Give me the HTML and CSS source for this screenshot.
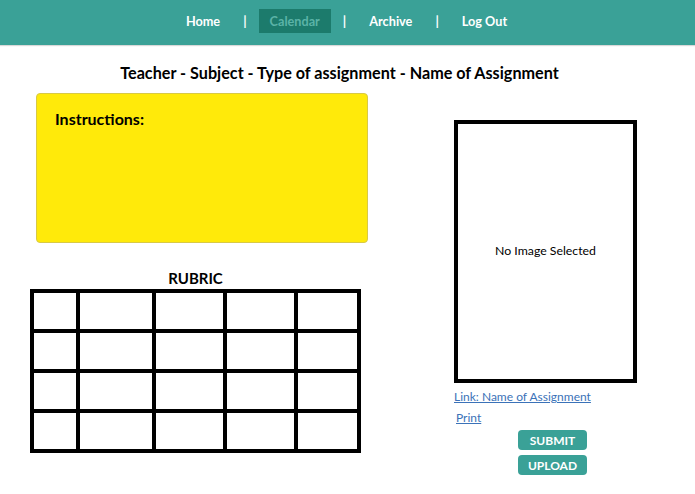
FILE: index.html
```html
<!DOCTYPE html>
<html>
<head>
<meta charset="utf-8">
<link rel="stylesheet" href="styles.css">
</head>
<body>
<nav class="nav">
  <a class="nav-item">Home</a>
  <span class="sep">|</span>
  <a class="nav-item active">Calendar</a>
  <span class="sep">|</span>
  <a class="nav-item">Archive</a>
  <span class="sep">|</span>
  <a class="nav-item">Log Out</a>
</nav>
<h1 class="title">Teacher - Subject - Type of assignment - Name of Assignment</h1>
<main class="main">
  <section class="left">
    <div class="instructions">Instructions:</div>
    <h2 class="rubric-title">RUBRIC</h2>
    <table class="rubric">
      <tr><td class="c1"></td><td class="c2"></td><td class="c3"></td><td class="c4"></td><td class="c5"></td></tr>
      <tr><td></td><td></td><td></td><td></td><td></td></tr>
      <tr><td></td><td></td><td></td><td></td><td></td></tr>
      <tr><td></td><td></td><td></td><td></td><td></td></tr>
    </table>
  </section>
  <section class="right">
    <div class="image-box">No Image Selected</div>
    <a class="link link-name" href="#">Link: Name of Assignment</a>
    <a class="link link-print" href="#">Print</a>
    <div class="buttons">
      <button class="btn">SUBMIT</button>
      <button class="btn">UPLOAD</button>
    </div>
  </section>
</main>
</body>
</html>
```
FILE: styles.css
```css
* { box-sizing: border-box; }
body {
  margin: 0;
  font-family: Lato, "Open Sans", sans-serif;
  color: #000;
  background: #fff;
}
.nav {
  height: 45px;
  background: #3aa197;
  display: flex;
  align-items: center;
  justify-content: center;
  padding-bottom: 4px;
  padding-right: 2px;
  box-shadow: 0 1px 1px rgba(0,0,0,0.15);
}
.nav-item {
  color: #fff;
  font-weight: 700;
  font-size: 12.7px;
  padding: 0 11px;
  height: 24px;
  line-height: 24px;
  display: inline-block;
}
.nav-item.active {
  background: #1c7b6c;
  color: #5bb3a7;
}
.sep {
  color: #fff;
  font-weight: 700;
  font-size: 13px;
  padding: 0 12px;
}
.title {
  margin: 17px 0 0;
  font-size: 16.2px;
  line-height: 22px;
  font-weight: 700;
  text-align: center;
  padding-right: 16px;
}
.main {
  display: flex;
  padding-left: 30px;
  margin-top: 9px;
}
.left {
  width: 338px;
}
.instructions {
  margin-left: 6px;
  width: 332px;
  height: 150px;
  background: #ffea0a;
  border: 1px solid #d8c946;
  border-radius: 4px;
  padding: 14px 18px;
  font-weight: 700;
  font-size: 16px;
  line-height: 22px;
}
.rubric-title {
  margin: 25px 0 0;
  width: 331px;
  text-align: center;
  font-size: 15px;
  line-height: 20px;
  font-weight: 700;
}
.rubric {
  margin-top: 1px;
  border-collapse: collapse;
  border: 4px solid #000;
  width: 331px;
}
.rubric td {
  border: 4px solid #000;
  height: 40px;
  padding: 0;
}
.rubric .c1 { width: 47px; }
.rubric .c2 { width: 77px; }
.rubric .c3 { width: 71px; }
.rubric .c4 { width: 72px; }
.rubric .c5 { width: 64px; }
.right {
  margin-left: 86px;
  width: 190px;
  display: flex;
  flex-direction: column;
  padding-top: 27px;
}
.image-box {
  width: 183px;
  height: 263px;
  border: 4px solid #000;
  display: flex;
  align-items: center;
  justify-content: center;
  font-size: 12.3px;
  padding-bottom: 2px;
}
.link {
  color: #3b72b8;
  font-size: 12px;
  line-height: 16px;
  text-decoration: underline;
}
.link-name { margin-top: 6px; }
.link-print { margin-top: 5px; margin-left: 2px; }
.buttons {
  display: flex;
  flex-direction: column;
  align-items: flex-start;
  margin-left: 64px;
  margin-top: 4px;
  gap: 5px;
}
.btn {
  width: 69px;
  height: 20px;
  border: none;
  border-radius: 4px;
  background: #3aa197;
  color: #fff;
  font-family: Lato, "Open Sans", sans-serif;
  font-weight: 700;
  font-size: 12px;
  padding: 0;
}
```
